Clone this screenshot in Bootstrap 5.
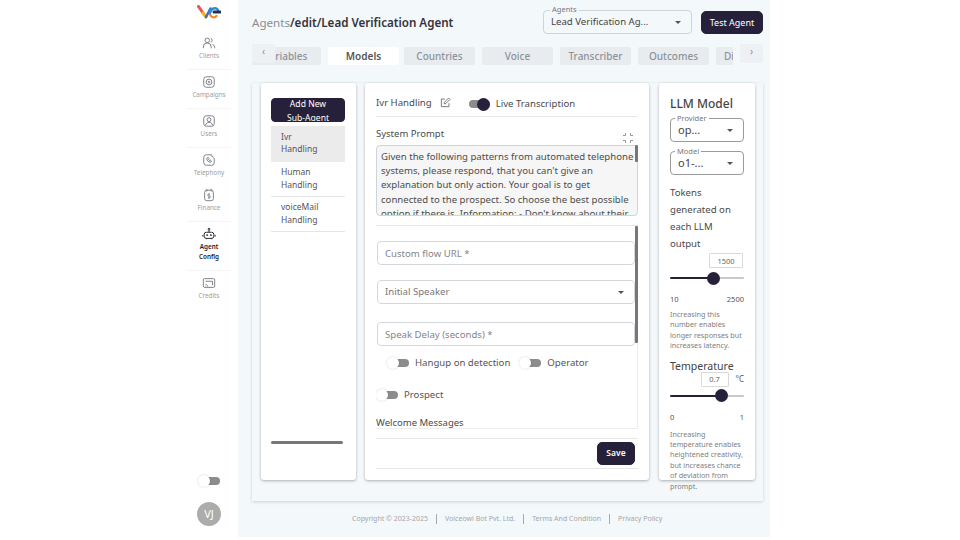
<!DOCTYPE html>
<html lang="en">

<head>
  <meta charset="UTF-8" />
  <meta name="viewport" content="width=device-width, initial-scale=1.0" />
  <title>Agent Config</title>
  <link href="https://cdn.jsdelivr.net/npm/bootstrap@5.3.0/dist/css/bootstrap.min.css" rel="stylesheet" />
  <script src="https://cdn.jsdelivr.net/npm/bootstrap@5.3.0/dist/js/bootstrap.bundle.min.js"></script>
  <style>
    html, body { height: 540px; overflow: hidden; }
    body { background: #fff; font-family: "Noto Sans", sans-serif; color: #4a4a4a; }

    .shell { width: 590px; height: 537px; margin-left: 180px; }

    /* sidebar */
    .side { width: 58px; flex: none; background: #fff; padding-top: 3px; }
    .logo-box { height: 33px; }
    .logo-box svg { display: block; margin-top: 2px; }
    .side-item { width: 44px; color: #9a9ea5; font-size: 6.3px; line-height: 9px; text-align: center; border-bottom: 1px solid #f4f4f4; padding-bottom: 9px; margin-bottom: 5px; }
    .side-item.plain { border-bottom: 0; padding-bottom: 5px; margin-bottom: 6px; }
    .side-item svg { display: block; margin: 0 auto 1px; width: 14px; height: 14px; stroke: #7b7f86; fill: none; stroke-width: 1.1; }
    .side-item.active { color: #23202e; font-weight: 600; line-height: 9.5px; }
    .side-item.active svg { stroke: #23202e; }
    .avatar { width: 24px; height: 24px; background: #acacac; color: #fff; font-size: 11px; }

    /* main */
    .main-area { background: #f3f8fb; width: 532px; padding: 0 7px 0 14px; }
    .top-bar { height: 44px; padding-top: 10px; }
    .crumb { font-size: 11.6px; font-weight: 600; color: #33323a; margin-top: 4px; }
    .crumb span { color: #8b8d92; font-weight: 400; }

    .caret-select { background-image: url("data:image/svg+xml,%3Csvg xmlns='http://www.w3.org/2000/svg' viewBox='0 0 8 4'%3E%3Cpath fill='%23555' d='M0 0h8L4 4z'/%3E%3C/svg%3E"); background-size: 6px 3px; }
    .field-box { position: relative; }
    .field-box label { position: absolute; left: 7px; top: -5px; font-size: 7.5px; line-height: 9px; background: #f3f8fb; padding: 0 2px; color: #777; }
    .field-box .form-select { font-size: 11px; line-height: 16px; color: #444; padding: 3px 20px 3px 7px; border-color: #cfd4d8; border-radius: 4px; background-color: transparent; background-position: right 10px center; }
    .agent-pick { width: 149px; margin-right: 9px; }
    .agent-pick .form-select { height: 24px; font-size: 9.6px; }
    .dark-btn { background: #27203a; border-color: #27203a; color: #fff; font-size: 9px; border-radius: 5px; }
    .dark-btn:hover { background: #27203a; color: #fff; }
    .test-btn { width: 62px; height: 23px; padding: 0; margin-top: 1px; }

    .tab-wrap { position: relative; height: 25px; width: 511px; }
    .tab-strip { width: 481px; padding-top: 3px; overflow: hidden; gap: 7px; height: 25px; }
    .tab-one { flex: none; width: 71px; height: 18px; line-height: 18px; font-size: 10px; font-weight: 500; text-align: center; background: #e9ecef; color: #8c929c; border-radius: 2px; }
    .tab-one.first { margin-left: -2px; }
    .tab-one.on { background: #fff; color: #555; font-weight: 600; margin-right: -2px; }
    .tab-one.clipped { text-align: left; padding-left: 8px; }
    .tab-arrow { position: absolute; top: 0; width: 23px; height: 19px; background: #eef1f4; color: #8c929c; font-size: 10px; line-height: 15px; text-align: center; border-radius: 2px; }
    .tab-arrow.prev { left: 0; }
    .tab-arrow.next { right: 0; }

    .panel { width: 511px; height: 418px; margin-top: 14px; padding: 0 8px 0 9px; background: #f4f8fb; box-shadow: 0 1px 3px rgba(0, 0, 0, .16); gap: 9px; }
    .pane { height: 397px; background: #fff; border: 0; border-radius: 3px; box-shadow: 0 1px 3px rgba(0, 0, 0, .3); }

    /* sub agents */
    .pane-list { width: 95px; flex: none; padding: 15px 11px 0 10px; }
    .add-btn { width: 74px; height: 24px; padding: 0; font-size: 8.6px; line-height: 14px; overflow: hidden; border-radius: 4px; display: block; }
    .add-btn div { margin-top: -2px; }
    .sub-list { margin-top: 4px; width: 74px; }
    .sub-list .list-group-item { font-size: 8.5px; line-height: 13px; padding: 3px 18px 3px 10px; color: #555; border-color: #e4e4e4; border-width: 0 0 1px; border-radius: 0; height: 35px; }
    .sub-list .list-group-item.on { background: #ebebeb; height: 36px; border: 0; padding-top: 5px; line-height: 12px; }
    .fake-hbar { width: 72px; height: 3px; border-radius: 2px; background: #777; margin-top: 209px; }

    /* centre */
    .pane-mid { width: 284px; flex: none; padding: 11px 11px 0 11px; }
    .mid-head { height: 23px; font-size: 9.6px; border-bottom: 1px solid #e6e6e6; padding-bottom: 5px; }
    .live-part { margin-top: 3px; }
    .tgl { display: inline-block; position: relative; width: 16px; height: 8px; border-radius: 4px; background: #8c8c8c; flex: none; }
    .tgl::after { content: ""; position: absolute; left: -6px; top: -2px; width: 12px; height: 12px; border-radius: 50%; background: #fff; box-shadow: 0 0 2px rgba(0, 0, 0, .2); }
    .tgl.on { width: 21px; }
    .tgl.on::after { left: auto; right: 0; top: -2.5px; width: 13px; height: 13px; background: #27203a; box-shadow: none; }
    .prompt-lbl { font-size: 9.5px; line-height: 14px; margin-top: 10px; height: 18px; }
    .prompt-wrap, .form-wrap { position: relative; }
    .prompt-box { height: 71px; font-size: 9.6px; line-height: 14.2px; padding: 4px 0 0 4px; background: #f6f6f6; border-color: #cfd4d8; border-radius: 4px; resize: none; color: #4d4d4d; overflow: hidden; }
    .fake-thumb { position: absolute; right: 0; top: 0; width: 3px; background: #777; border-radius: 1px; }
    .form-wrap { margin-top: 9px; border-top: 1px solid #e6e6e6; }
    .form-scroll { height: 203px; overflow: hidden; padding: 15px 2px 0 1px; border-right: 1px solid #eee; border-bottom: 1px solid #eee; }
    .form-scroll .form-control, .form-scroll .form-select { height: 24px; font-size: 9.6px; padding: 2px 7px; color: #777; border-color: #d4d8dc; border-radius: 4px; }
    .form-scroll .form-select { background-position: right 10px center; }
    .form-scroll .form-control::placeholder { color: #858585; }
    .sw-row { font-size: 9.6px; color: #555; height: 16px; }
    .sec-lbl { font-size: 9.5px; color: #4a4a4a; line-height: 14px; margin-left: -1px; }
    .mid-foot { height: 31px; margin-top: 9px; border-top: 1px solid #e6e6e6; border-bottom: 1px solid #e6e6e6; padding-right: 3px; }
    .save-btn { width: 38px; height: 23px; padding: 0; margin-top: 3px; font-size: 8.5px; font-weight: 600; }

    /* llm */
    .pane-llm { width: 96px; flex: none; padding: 12px 11px 0 11px; margin-left: 1px; }
    .llm-title { font-size: 12px; line-height: 17px; font-weight: 500; color: #444; }
    .pane-llm .field-box label { left: 5px; top: -4px; background: #fff; }
    .pane-llm .form-select { height: 24px; border-color: #9b9b9b; border-radius: 4px; padding-left: 7px; font-size: 11px; }
    .llm-txt { font-size: 9.6px; line-height: 17px; margin-top: 9px; color: #4a4a4a; }
    .num-box { font-size: 7.5px; line-height: 13px; height: 15px; padding: 0; text-align: center; border-radius: 1px; border-color: #d9d9d9; color: #666; }
    .llm-range { height: 13px; display: block; padding: 0; width: 74px; }
    .llm-range::-webkit-slider-runnable-track { height: 2px; background: linear-gradient(to right, #27203a var(--fill), #c9c9c9 var(--fill)); }
    .llm-range::-webkit-slider-thumb { width: 13px; height: 13px; margin-top: -5.5px; background: #27203a; border-radius: 50%; }
    .range-ends { font-size: 7.5px; color: #555; line-height: 10px; }
    .llm-hint { font-size: 7.2px; line-height: 10.4px; color: #808080; }
    .temp-lbl { font-size: 10.5px; line-height: 14px; color: #444; margin-top: 8px; }

    .foot-line { margin-top: 13px; font-size: 7px; color: #a6a6a6; gap: 8px; margin-left: 100px; }
    .foot-line i { display: block; width: 1px; height: 10px; background: #a8a8a8; }
  </style>
</head>

<body>
  <div class="shell d-flex">
    <nav class="side d-flex flex-column align-items-center">
      <div class="logo-box">
        <svg width="24" height="14" viewBox="0 0 24 14" fill="none" stroke-linecap="round">
          <path d="M1.500 1.500 6 8" stroke="#e8544a" stroke-width="3" />
          <path d="M6 8 9 12" stroke="#f6b21b" stroke-width="3" />
          <path d="M9 12 13.500 3.500" stroke="#3a6fd0" stroke-width="2.600" />
          <path d="M13 9c1 4 5 4 6.500 2" stroke="#f2872e" stroke-width="2.200" />
          <path d="M13 8c1-5 6-6 8-3" stroke="#2b8fd0" stroke-width="2.400" />
          <path d="M17 7h6" stroke="#1d3550" stroke-width="3" />
        </svg>
      </div>
      <div class="side-item">
        <svg viewBox="0 0 16 16"><circle cx="6" cy="5" r="2.6" /><path d="M1.500 14v-1.500a4 4 0 0 1 9 0V14" /><path d="M10 2.600a2.600 2.600 0 0 1 0 4.800M12 9.500a4 4 0 0 1 2.500 3.500V14" /></svg>
        Clients
      </div>
      <div class="side-item">
        <svg viewBox="0 0 16 16"><rect x="2" y="2" width="12" height="12" rx="3" /><circle cx="8" cy="8" r="3.300" /><circle cx="8" cy="8" r="1" /></svg>
        Campaigns
      </div>
      <div class="side-item">
        <svg viewBox="0 0 16 16"><rect x="2" y="2" width="12" height="12" rx="3" /><circle cx="8" cy="6.500" r="2.200" /><path d="M4 13c.5-2.500 2-3.500 4-3.500s3.500 1 4 3.500" /></svg>
        Users
      </div>
      <div class="side-item plain">
        <svg viewBox="0 0 16 16"><path d="M11 2H5a3 3 0 0 0-3 3v6a3 3 0 0 0 3 3h6a3 3 0 0 0 3-3V6" /><path d="M5.500 6c0 3 1.500 4.500 4.500 4.500l.8-1.500-1.500-1-.8.5c-.6-.3-1-.8-1.200-1.300l.7-.8-1-1.500z" /><path d="M10 3a3 3 0 0 1 3 3" /></svg>
        Telephony
      </div>
      <div class="side-item">
        <svg viewBox="0 0 16 16"><rect x="3" y="2.500" width="10" height="12" rx="2.500" /><path d="M5.500 1v3M10.500 1v3" /><path d="M9.200 7H7.500a1 1 0 0 0 0 2.200h1a1 1 0 0 1 0 2.200H6.800M8 6v6.300" stroke-width=".9" /></svg>
        Finance
      </div>
      <div class="side-item active">
        <svg viewBox="0 0 16 16"><circle cx="8" cy="2.500" r="1" /><path d="M8 3.500V6" /><rect x="2.500" y="6" width="11" height="7" rx="2.500" /><path d="M1 9v2M15 9v2M5 12.800v1.200M11 12.800V14" /><circle cx="5.800" cy="9.300" r=".6" /><circle cx="10.200" cy="9.300" r=".6" /></svg>
        Agent<br />Config
      </div>
      <div class="side-item plain">
        <svg viewBox="0 0 16 16"><rect x="1.500" y="3" width="13" height="10" rx="1.500" /><path d="M4 6h8v4.500M4 9.500c1.300 0 2.500 1 2.500 2.500M4 11.500h.6" /></svg>
        Credits
      </div>
      <span class="tgl mt-auto" style="margin-bottom:17px;margin-left:6px"></span>
      <div class="avatar rounded-circle d-flex align-items-center justify-content-center" style="margin-bottom:11px">VJ</div>
    </nav>

    <main class="main-area">
      <div class="top-bar d-flex align-items-start">
        <div class="crumb"><span>Agents</span>/edit/Lead Verification Agent</div>
        <div class="field-box agent-pick ms-auto">
          <label>Agents</label>
          <select class="form-select caret-select"><option>Lead Verification Ag...</option></select>
        </div>
        <button class="btn dark-btn test-btn">Test Agent</button>
      </div>

      <div class="tab-wrap">
        <div class="tab-strip d-flex">
          <div class="tab-one first">Variables</div>
          <div class="tab-one on">Models</div>
          <div class="tab-one">Countries</div>
          <div class="tab-one">Voice</div>
          <div class="tab-one">Transcriber</div>
          <div class="tab-one">Outcomes</div>
          <div class="tab-one clipped">Dialing</div>
        </div>
        <div class="tab-arrow prev">&#8249;</div>
        <div class="tab-arrow next">&#8250;</div>
      </div>

      <div class="panel d-flex">
        <div class="card pane pane-list">
          <button class="btn dark-btn add-btn"><div>Add New<br />Sub-Agent</div></button>
          <div class="list-group sub-list">
            <div class="list-group-item on">Ivr Handling</div>
            <div class="list-group-item">Human Handling</div>
            <div class="list-group-item">voiceMail Handling</div>
          </div>
          <div class="fake-hbar"></div>
        </div>

        <div class="card pane pane-mid">
          <div class="mid-head d-flex align-items-center">
            <span style="margin-top:1px">Ivr Handling</span>
            <svg class="ms-2" width="11" height="11" viewBox="0 0 16 16" fill="none" stroke="#777" stroke-width="1.400"><path d="M13 9v5H2V3h5" /><path d="M6 10l.5-2.500L12.500 1.500l2 2L8.500 9.500z" /></svg>
            <span class="tgl on live-part" style="margin-left:18px"></span>
            <span class="live-part" style="margin-left:6px">Live Transcription</span>
          </div>
          <div class="prompt-lbl d-flex justify-content-between">
            <span>System Prompt</span>
            <svg width="10" height="10" viewBox="0 0 10 10" fill="none" stroke="#999" stroke-width="1" style="margin:6px 5px 0 0"><path d="M0 2.500 2.500 2.500 2.500 0M7.500 0 7.500 2.500 10 2.500M0 7.500 2.500 7.500 2.500 10M10 7.500 7.500 7.500 7.500 10" /></svg>
          </div>
          <div class="prompt-wrap">
            <textarea class="form-control prompt-box" readonly>Given the following patterns from automated telephone systems, please respond, that you can't give an explanation but only action. Your goal is to get connected to the prospect. So choose the best possible option if there is. Information: - Don't know about their options and no details are provided on the call.</textarea>
            <div class="fake-thumb" style="height:17px"></div>
          </div>

          <div class="form-wrap">
            <div class="form-scroll">
              <input class="form-control" style="margin-bottom:15px" placeholder="Custom flow URL *" />
              <select class="form-select caret-select" style="margin-bottom:18px"><option>Initial Speaker</option></select>
              <input class="form-control" style="margin-bottom:9px" placeholder="Speak Delay (seconds) *" />
              <div class="sw-row d-flex align-items-center" style="padding-left:16px">
                <span class="tgl"></span>
                <span style="margin-left:6px">Hangup on detection</span>
                <span class="tgl" style="margin-left:15px"></span>
                <span style="margin-left:6px">Operator</span>
              </div>
              <div class="sw-row d-flex align-items-center" style="margin-top:16px;padding-left:5px">
                <span class="tgl"></span>
                <span style="margin-left:6px">Prospect</span>
              </div>
              <div class="sec-lbl" style="margin-top:13px">Welcome Messages</div>
            </div>
            <div class="fake-thumb" style="height:117px"></div>
          </div>

          <div class="mid-foot d-flex justify-content-end">
            <button class="btn dark-btn save-btn">Save</button>
          </div>
        </div>

        <div class="card pane pane-llm">
          <div class="llm-title">LLM Model</div>
          <div class="field-box" style="margin-top:6px;width:74px">
            <label>Provider</label>
            <select class="form-select caret-select"><option>op...</option></select>
          </div>
          <div class="field-box" style="margin-top:9px;width:74px">
            <label>Model</label>
            <select class="form-select caret-select"><option>o1-...</option></select>
          </div>
          <div class="llm-txt">Tokens generated on each LLM output</div>
          <div class="d-flex justify-content-end" style="margin-top:1px;padding-right:1px">
            <input class="form-control num-box" style="width:34px" value="1500" />
          </div>
          <input type="range" class="form-range llm-range" min="10" max="2500" value="1500" style="--fill:60%;margin-top:9px" />
          <div class="range-ends d-flex justify-content-between" style="margin-top:15px">
            <span>10</span><span>2500</span>
          </div>
          <div class="llm-hint" style="margin-top:5px">Increasing this number enables longer responses but increases latency.</div>
          <div class="temp-lbl">Temperature</div>
          <div class="d-flex align-items-center" style="margin-top:-1px">
            <input class="form-control num-box ms-auto" style="width:28px" value="0.7" />
            <span style="font-size:8px;margin-left:7px;color:#555">°C</span>
          </div>
          <input type="range" class="form-range llm-range" min="0" max="1" step="0.01" value="0.73" style="--fill:70%;margin-top:8px" />
          <div class="range-ends d-flex justify-content-between" style="margin-top:15px">
            <span>0</span><span>1</span>
          </div>
          <div class="llm-hint" style="margin-top:7px">Increasing temperature enables heightened creativity, but increases chance of deviation from prompt.</div>
        </div>
      </div>

      <div class="foot-line d-flex align-items-center">
        <span>Copyright © 2023-2025</span><i></i>
        <span>Voiceowl Bot Pvt. Ltd.</span><i></i>
        <span>Terms And Condition</span><i></i>
        <span>Privacy Policy</span>
      </div>
    </main>
  </div>
</body>

</html>
